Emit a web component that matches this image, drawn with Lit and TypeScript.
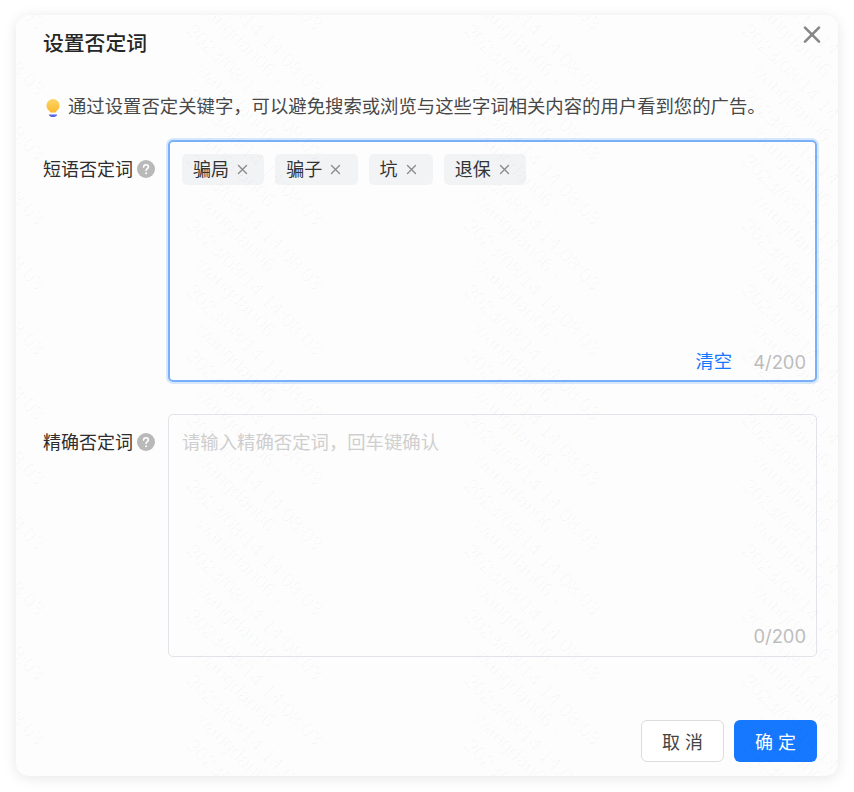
import { LitElement, html, css } from "lit";
import { customElement } from "lit/decorators.js";

const help = html`<svg class="help" viewBox="0 0 18 18" aria-hidden="true"><circle cx="9" cy="9" r="9" fill="#b9b9b9"/><path d="M6.6 7.1a2.4 2.4 0 0 1 4.8 0c0 1.5-2.3 1.7-2.3 3.3" fill="none" stroke="#fff" stroke-width="1.6" stroke-linecap="round"/><circle cx="9.1" cy="13.2" r="1" fill="#fff"/></svg>`;

@customElement("app-root")
export class AppRoot extends LitElement {
  static styles = css`
    :host {
      display: block;
      width: 854px;
      height: 792px;
      box-sizing: border-box;
      padding: 15px 16px 16px;
      background: #fff;
      font-family: "Noto Sans CJK SC", "Noto Sans", sans-serif;
      color: #333;
    }
    .dialog {
      position: relative;
      height: 761px;
      box-sizing: border-box;
      border-radius: 13px;
      background: #fdfdfd;
      box-shadow: 0 2px 14px rgba(0, 0, 0, 0.1);
      padding: 11px 21px 14px 27px;
      display: flex;
      flex-direction: column;
      overflow: hidden;
    }
    .title {
      font-size: 20.8px;
      line-height: 32px;
      font-weight: 500;
      color: #262626;
    }
    .close {
      position: absolute;
      top: 11px;
      right: 17px;
      width: 18px;
      height: 18px;
    }
    .tip {
      margin-top: 31px;
      height: 32px;
      display: flex;
      align-items: center;
      font-size: 18.36px;
      line-height: 32px;
      color: #484848;
      gap: 7px;
      margin-left: 2px;
    }
    .bulb {
      width: 16px;
      height: 20px;
      flex: none;
      margin-top: 5px;
    }
    .rows {
      margin-top: 19px;
      display: flex;
      flex-direction: column;
      gap: 32px;
    }
    .row {
      display: grid;
      grid-template-columns: 125px 649px;
    }
    .label {
      display: flex;
      align-items: center;
      height: 32px;
      margin-top: 12px;
      font-size: 18px;
      color: #2e2e2e;
      gap: 4px;
    }
    .row:nth-child(2) .label {
      margin-top: 11px;
    }
    .help {
      width: 18px;
      height: 18px;
      flex: none;
      margin-top: 2px;
    }
    .box {
      box-sizing: border-box;
      border: 1px solid #e3e4ea;
      border-radius: 5px;
      height: 243px;
      padding: 12px 10px 9px 13px;
      display: flex;
      flex-direction: column;
      justify-content: space-between;
    }
    .box.focus {
      height: 242px;
      border: 2px solid #78b0fb;
      padding: 12px 9px 7px 12px;
      box-shadow: 0 0 0 2px rgba(120, 176, 251, 0.28);
    }
    .tags {
      display: flex;
      gap: 11px;
    }
    .tag {
      height: 31px;
      box-sizing: border-box;
      display: flex;
      align-items: center;
      padding: 0 16.25px 0 11px;
      gap: 8px;
      background: #f2f3f5;
      border-radius: 5px;
      font-size: 18px;
      line-height: 27px;
      color: #333;
    }
    .tag span {
      display: block;
      margin-top: -3px;
    }
    .tag svg {
      width: 11px;
      height: 11px;
      flex: none;
    }
    .placeholder {
      font-size: 18.36px;
      line-height: 29px;
      color: #cfcfcf;
    }
    .foot {
      display: flex;
      justify-content: flex-end;
      align-items: flex-end;
      min-height: 26px;
      gap: 21px;
      font-size: 18.36px;
      line-height: 26px;
      color: #bdbdbd;
    }
    .count {
      font-family: Inter, "Noto Sans", sans-serif;
      line-height: 22px;
    }
    .clear {
      color: #1677ff;
    }
    .actions {
      margin-top: auto;
      display: flex;
      justify-content: flex-end;
      gap: 10px;
    }
    .btn {
      width: 83px;
      height: 42px;
      box-sizing: border-box;
      border-radius: 6px;
      display: flex;
      align-items: center;
      justify-content: center;
      font-size: 18px;
      letter-spacing: 5px;
      padding-left: 5px;
    }
    .cancel {
      border: 1px solid #dcdcdc;
      background: #fff;
      color: #444;
    }
    .ok {
      background: #1677ff;
      color: #fff;
    }
    .marks {
      position: absolute;
      inset: 0;
      pointer-events: none;
    }
    .mark {
      position: absolute;
      width: 240px;
      transform-origin: 0 0;
      transform: rotate(45deg);
      text-align: center;
      font-family: "Liberation Sans", sans-serif;
      font-size: 20px;
      line-height: 20px;
      white-space: nowrap;
      color: rgba(0, 0, 0, 0.026);
    }
  `;

  private marks() {
    const out = [];
    for (let c = -2; c < 3; c++) {
      for (let r = -14; r < 14; r++) {
        const x = 195 + 278 * c - 16 - 18;
        const y = 203 + 65 * r - 15 - 8;
        out.push(html`<div class="mark" style="left:${x}px;top:${y}px">2023/08/14 14:08:03<br />wangdan06 -</div>`);
      }
    }
    return out;
  }

  private tag(t: string) {
    return html`<span class="tag"><span>${t}</span><svg viewBox="0 0 11 11"><path d="M1.5 1.5l8 8M9.5 1.5l-8 8" stroke="#8c8c8c" stroke-width="1.4" stroke-linecap="round"/></svg></span>`;
  }

  render() {
    return html`
      <div class="dialog">
        <div class="title">设置否定词</div>
        <svg class="close" viewBox="0 0 18 18"><path d="M2 1.600l14 14M16 1.600l-14 14" stroke="#878787" stroke-width="2.6" stroke-linecap="round"/></svg>
        <div class="tip">
          <svg class="bulb" viewBox="0 0 16 20"><defs><linearGradient id="bg" x1="0" y1="0" x2="0" y2="1"><stop offset="0" stop-color="#fdd566"/><stop offset="1" stop-color="#fab92e"/></linearGradient></defs><path d="M8 1a6.6 6.6 0 0 0-6.6 6.6c0 2.6 1.4 4.2 3 5.4.5.4.7 1 .8 1.6h5.600c.1-.6.3-1.200.8-1.600 1.600-1.200 3-2.800 3-5.400A6.600 6.600 0 0 0 8 1z" fill="url(#bg)"/><path d="M3.800 16.500h8.400c-.4 1.800-2.200 2.600-4.200 2.600s-3.800-.8-4.200-2.600z" fill="#5a66e0"/></svg>
          <span>通过设置否定关键字，可以避免搜索或浏览与这些字词相关内容的用户看到您的广告。</span>
        </div>
        <div class="rows">
          <div class="row">
            <div class="label">短语否定词${help}</div>
            <div class="box focus">
              <div class="tags">${["骗局", "骗子", "坑", "退保"].map((t) => this.tag(t))}</div>
              <div class="foot"><span class="clear">清空</span><span class="count">4/200</span></div>
            </div>
          </div>
          <div class="row">
            <div class="label">精确否定词${help}</div>
            <div class="box">
              <div class="placeholder">请输入精确否定词，回车键确认</div>
              <div class="foot"><span class="count">0/200</span></div>
            </div>
          </div>
        </div>
        <div class="actions">
          <div class="btn cancel">取消</div>
          <div class="btn ok">确定</div>
        </div>
        <div class="marks">${this.marks()}</div>
      </div>
    `;
  }
}
